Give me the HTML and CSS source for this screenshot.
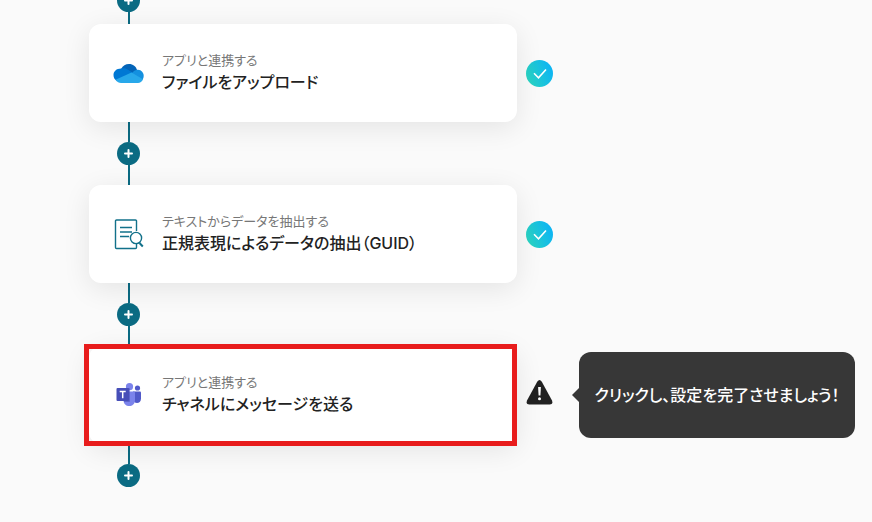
FILE: index.html
```html
<!DOCTYPE html>
<html lang="ja">
<head>
    <meta charset="UTF-8">
    <meta name="viewport" content="width=device-width, initial-scale=1.0">
    <title>フローボット</title>
    <link rel="stylesheet" href="styles.css">
</head>
<body>
    <main class="flow">
        <div class="connector connector-first">
            <button class="add" aria-label="追加"><svg viewBox="0 0 23 23"><path d="M11.5 8v7M8 11.5h7"/></svg></button>
        </div>

        <section class="step">
            <button class="card">
                <svg class="app-icon" viewBox="0 0 32 32">
                    <path fill="#0364b8" d="M8 12C10 8.500 12.500 7 16 7c4 0 7 2.500 8 6l-5 6z"/>
                    <path fill="#0078d4" d="M9 11.500c2.500-.5 4.500.3 6 1.300l6 3.700L4 24c-2.500-1.500-3.500-3.500-3.500-6 0-3.800 3.200-6.900 8.500-6.500z"/>
                    <path fill="#1490df" d="M19 16c2-2.500 4-3.300 6-3.200 3.500.2 5.700 3 5.700 6.200 0 1.500-.4 2.700-1.200 3.800L19 18z"/>
                    <path fill="#28a8ea" d="M18.500 15.500L30 22.300C29 24.800 27 26 25 26H8c-2 0-4-.8-5.500-3.200z"/>
                </svg>
                <span class="text">
                    <span class="label">アプリと連携する</span>
                    <span class="title">ファイルをアップロード</span>
                </span>
            </button>
            <svg class="status" viewBox="0 0 27 27" role="img" aria-label="設定済み">
                <defs>
                    <linearGradient id="done" x1="0" y1="0.7" x2="1" y2="0.3">
                        <stop offset="0" stop-color="#2bd5c0"/>
                        <stop offset="1" stop-color="#0bb3f6"/>
                    </linearGradient>
                </defs>
                <circle cx="13.5" cy="13.500" r="13.500" fill="url(#done)"/>
                <path d="M8 13.300l4.500 4.500 7.500-8.300" fill="none" stroke="#fff" stroke-width="1.600"/>
            </svg>
        </section>

        <div class="connector">
            <button class="add" aria-label="追加"><svg viewBox="0 0 23 23"><path d="M11.5 8v7M8 11.5h7"/></svg></button>
        </div>

        <section class="step">
            <button class="card">
                <svg class="app-icon" viewBox="0 0 32 32" fill="none" stroke="#12718a" stroke-width="1.400">
                    <path d="M23.500 13V3q0-1-1-1h-19q-1 0-1 1v26.500q0 1 1 1h19q1 0 1-1V26"/>
                    <path d="M7 9.500h12M7 14h12M7 18.500h9"/>
                    <circle cx="23" cy="20" r="5.600"/>
                    <path stroke-width="2" d="M26.500 25l3.300 3.500"/>
                </svg>
                <span class="text">
                    <span class="label">テキストからデータを抽出する</span>
                    <span class="title">正規表現によるデータの抽出（GUID）</span>
                </span>
            </button>
            <svg class="status" viewBox="0 0 27 27" role="img" aria-label="設定済み">
                <circle cx="13.5" cy="13.500" r="13.500" fill="url(#done)"/>
                <path d="M8 13.300l4.500 4.500 7.500-8.300" fill="none" stroke="#fff" stroke-width="1.600"/>
            </svg>
        </section>

        <div class="connector">
            <button class="add" aria-label="追加"><svg viewBox="0 0 23 23"><path d="M11.5 8v7M8 11.5h7"/></svg></button>
        </div>

        <section class="step">
            <button class="card card-active">
                <svg class="app-icon" viewBox="0 0 32 32">
                    <circle cx="24.500" cy="9" r="2.600" fill="#5059c9"/>
                    <path fill="#5059c9" d="M20 12.500h7q1 0 1 1v6c0 3-2 4.500-4 4.500s-4-1.500-4-4z"/>
                    <circle cx="16.500" cy="7.700" r="3.600" fill="#7b83eb"/>
                    <path fill="#7b83eb" d="M11 12.500h10q1 0 1 1V21c0 4-2.800 6-5.800 6S10.500 25 10.500 21z"/>
                    <path fill="#4a52b8" d="M12 9h4q1 0 1 1v12q0 1-1 1h-5V10z" opacity=".6"/>
                    <rect x="3.500" y="9" width="12.500" height="13" rx="1" fill="#464eb8"/>
                    <path d="M6.700 12.500h6M9.700 12.500v6.700" stroke="#fff" stroke-width="1.500"/>
                </svg>
                <span class="text">
                    <span class="label">アプリと連携する</span>
                    <span class="title">チャネルにメッセージを送る</span>
                </span>
            </button>
            <svg class="status status-warning" viewBox="0 0 27 33" role="img" aria-label="未設定">
                <path fill="#222" d="M11.200 2.700q2.300-3.400 4.600 0L26 21.500q1.300 4-2.400 4H3.400q-3.700 0-2.400-4z"/>
                <path fill="#fff" d="M12.100 8h2.800l-.5 8.500h-1.800z"/>
                <circle cx="13.500" cy="19.700" r="1.500" fill="#fff"/>
            </svg>
            <div class="tooltip" role="tooltip">クリックし、設定を完了させましょう！</div>
        </section>

        <div class="connector connector-last">
            <button class="add" aria-label="追加"><svg viewBox="0 0 23 23"><path d="M11.5 8v7M8 11.5h7"/></svg></button>
        </div>
    </main>
</body>
</html>
```

FILE: styles.css
```css
* {
    box-sizing: border-box;
}
body {
    margin: 0;
    background-color: #fafafa;
    color: #222;
    font-family: Inter, "Noto Sans CJK JP", sans-serif;
    font-feature-settings: "palt";
}
button {
    border: none;
    padding: 0;
    font: inherit;
    color: inherit;
    cursor: pointer;
}
.flow {
    padding: 0 17px 0 89px;
    overflow: hidden;
}
.step {
    display: grid;
    grid-template-columns: minmax(0, 1fr) 62px 276px;
    align-items: center;
}
.card {
    display: flex;
    align-items: center;
    gap: 17px;
    min-height: 98px;
    padding: 0 24px;
    background: #fff;
    border-radius: 12px;
    box-shadow: 0 6px 28px rgba(0, 0, 0, 0.09);
    text-align: left;
    position: relative;
}
/* 設定が必要なカードの赤枠 */
.card-active::after {
    content: "";
    position: absolute;
    inset: -2px 0 -2px -5px;
    border: 5px solid #e81c1c;
}
.app-icon {
    width: 32px;
    height: 32px;
    flex: none;
}
.text {
    padding-bottom: 2px;
}
.label,
.title {
    display: block;
}
.label {
    font-size: 13px;
    line-height: 20px;
    color: #777;
}
.title {
    font-size: 16px;
    line-height: 24px;
    font-weight: 500;
}
.status {
    width: 27px;
    height: 27px;
    margin-left: 9px;
}
.status-warning {
    height: 33px;
}
.tooltip {
    position: relative;
    display: flex;
    align-items: center;
    justify-content: center;
    min-height: 86px;
    padding-bottom: 2px;
    border-radius: 12px;
    background: #373737;
    color: #fff;
    font-size: 16px;
    font-weight: 500;
    white-space: nowrap;
}
.tooltip::before {
    content: "";
    position: absolute;
    left: -7px;
    top: 50%;
    margin-top: -7px;
    border: 7px solid transparent;
    border-left: none;
    border-right-color: #373737;
}
.connector {
    display: flex;
    flex-direction: column;
    align-items: center;
    width: 23px;
    height: 63px;
    margin-left: 28px;
}
.connector::before,
.connector::after {
    content: "";
    width: 2px;
    flex: 1;
    background: #0b6b83;
}
.connector-first {
    height: 24px;
    justify-content: flex-end;
}
.connector-first::before {
    display: none;
}
.connector-first::after {
    flex: 0 0 12px;
}
.connector-last::after {
    visibility: hidden;
}
.add {
    width: 23px;
    height: 23px;
    flex: none;
    border-radius: 50%;
    background: #0b6b83;
}
.add svg {
    display: block;
    stroke: #fff;
    stroke-width: 2;
    stroke-linecap: round;
}
```
